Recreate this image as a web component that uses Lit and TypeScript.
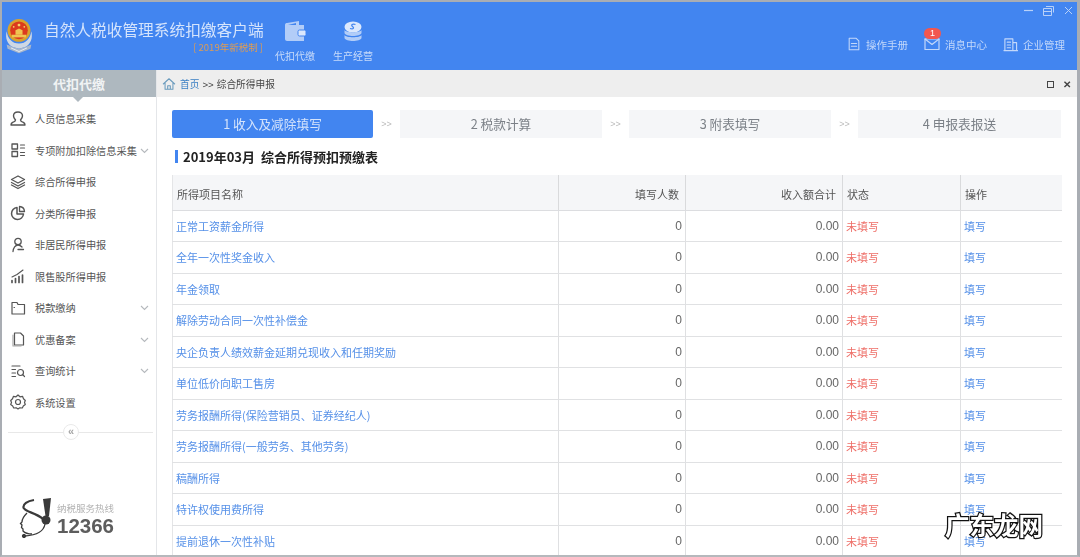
import { LitElement, html, css, svg } from "lit";
import { customElement } from "lit/decorators.js";

const ic = (body: unknown, size = 16) => html`<svg width=${size} height=${size} viewBox="0 0 16 16" fill="none" stroke="currentColor" stroke-width="1.2" stroke-linecap="round" stroke-linejoin="round">${body}</svg>`;

const menu: [string, unknown, boolean][] = [
  ["人员信息采集", svg`<path d="M5.500 9C3.800 7 3.500 5.500 3.500 5c0-2.500 2-4 4.500-4s4.500 1.500 4.500 4c0 .5-.3 2-2 4 0 1.500 1 1.800 3 2.500 1 .4 1.500 1 1.500 2.500H1c0-1.500.5-2.100 1.500-2.500 2-.7 3-1 3-2.500z" stroke-width="1.400"/>`, false],
  ["专项附加扣除信息采集", svg`<rect x="2" y="2" width="5.500" height="5" stroke-width="1.300"/><rect x="2" y="9.500" width="5.500" height="5" stroke-width="1.300"/><path d="M10.500 3h4M10.500 6h4M10.500 10.500h4M10.500 13.500h4"/>`, true],
  ["综合所得申报", svg`<path d="M8 2l6.500 3.500L8 9 1.500 5.500zM1.500 8.500L8 12l6.500-3.500M1.500 11L8 14.500l6.500-3.500" stroke-width="1.300"/>`, false],
  ["分类所得申报", svg`<path d="M7 2.500a6 6 0 1 0 6.500 6.500H7z" stroke-width="1.500" fill="none"/><path d="M9.500 1.500c2.800.2 4.800 2.200 5 5h-5z" stroke-width="1.300"/>`, false],
  ["非居民所得申报", svg`<circle cx="8" cy="4.500" r="3.200" stroke-width="1.300"/><path d="M3 14.500c.2-3.500 2.500-6.500 5-6.500 2.200 0 3 1 4 2M8 12.500h5.500" stroke-width="1.300"/>`, false],
  ["限售股所得申报", svg`<path d="M2 14.500v-2M5.500 14.500v-4M9 14.500V8.500M12.500 14.500v-7.500" stroke-width="1.700"/><path d="M2 9l5-2.500L13 2" stroke-width="1.100"/>`, false],
  ["税款缴纳", svg`<path d="M2 2.500h5l1 2h6.500v9.500H2z"/><path d="M4 7.500h.5"/>`, true],
  ["优惠备案", svg`<path d="M4.500 2h6l3 3v9h-9z" stroke-width="1.200"/><path d="M3 4v11h8" stroke="#aaa"/>`, true],
  ["查询统计", svg`<path d="M2 3h8M2 6.500h3.500M2 10h3.500M2 13.500h3.500"/><circle cx="10.500" cy="9.500" r="3"/><path d="M12.700 11.700l1.800 1.800"/>`, true],
  ["系统设置", svg`<path d="M8 1l2 1.800 2.500-.5 1 2.500 1.800 1.700-.8 2 .8 2-2 1.500-1 2-2.500-.2L8 15l-1.800-1.200-2.500.2-1-2-2-1.500.8-2-.8-2 1.800-1.700 1-2.500 2.500.5z"/><circle cx="8" cy="8" r="2.500"/>`, false],
];

const rows = ["正常工资薪金所得", "全年一次性奖金收入", "年金领取", "解除劳动合同一次性补偿金", "央企负责人绩效薪金延期兑现收入和任期奖励", "单位低价向职工售房", "劳务报酬所得(保险营销员、证券经纪人)", "劳务报酬所得(一般劳务、其他劳务)", "稿酬所得", "特许权使用费所得", "提前退休一次性补贴"];

@customElement("app-root")
export class AppRoot extends LitElement {
  static styles = css`
    :host { display: block; width: 1080px; height: 557px; overflow: hidden; position: relative; background: #fff; font-family: "Noto Sans CJK SC", "Liberation Sans", sans-serif; }
    .frame { height: 557px; box-sizing: border-box; border-top: 2px solid #a9adb3; border-left: 2px solid #a9adb3; border-right: 3px solid #a9adb3; border-bottom: 2px solid #b5b8bc; display: flex; flex-direction: column; filter: blur(0.5px); }
    .top { height: 68px; flex: none; background: #4285f0; display: flex; color: #cfe0fb; position: relative; }
    .logo { margin: 16px 2px 0 2px; flex: none; }
    .brand { margin: 16px 0 0 8px; width: 222px; }
    .brand h1 { margin: 0; font-size: 15.700px; line-height: 24px; font-weight: 400; color: #d5e4fc; white-space: nowrap; }
    .brand p { margin: -2px 0 0; font-size: 9.500px; line-height: 14px; color: #dd9c55; text-align: right; padding-right: 3px; white-space: nowrap; }
    .nav { width: 58px; display: flex; flex-direction: column; align-items: center; font-size: 10px; line-height: 14px; margin-top: 19px; color: #c8dbfa; }
    .nav svg { margin-bottom: 7px; }
    .spacer { flex: 1; }
    .tools { display: flex; align-items: center; gap: 16px; font-size: 10.500px; margin: 33px 12px 0 0; height: 18px; color: #c3d8fa; }
    .tool { display: flex; align-items: center; gap: 5px; position: relative; white-space: nowrap; }
    .badge { position: absolute; left: 0; top: -8px; width: 17px; height: 11px; border-radius: 6px; background: #f2574f; color: #fff; font-size: 9px; line-height: 11px; text-align: center; font-family: "Liberation Sans", sans-serif; }
    .win { position: absolute; right: 4px; top: 4px; display: flex; gap: 10px; color: #b9d1f8; }
    .body { flex: 1; min-height: 0; display: flex; }
    .side { width: 154px; flex: none; border-right: 1px solid #e4e6e9; display: flex; flex-direction: column; background: #fff; }
    .side-h { height: 27px; background: #aeb8bf; color: #f1f3f4; font-size: 13px; font-weight: 700; line-height: 27px; text-align: center; position: relative; flex: none; }
    .side-h::after { content: ""; position: absolute; left: 71px; bottom: -5px; border: 5px solid transparent; border-bottom: 0; border-top-color: #aeb8bf; }
    .menu { padding-top: 6px; flex: none; }
    .item { height: 31.500px; display: flex; align-items: center; color: #555; font-size: 10.200px; white-space: nowrap; }
    .item svg { color: #555; margin-left: 8px; flex: none; }
    .item span { margin-left: 9px; flex: 1; }
    .item svg.chev { color: #b5b9bd; margin: 0 7px 0 0; }
    .fold { height: 16px; margin: 6px 3px 0 6px; position: relative; display: flex; align-items: center; }
    .fold::before { content: ""; position: absolute; left: 0; right: 0; top: 50%; height: 1px; background: #e8e8e8; }
    .fold b { position: relative; width: 16px; height: 16px; margin-left: 55px; border-radius: 50%; background: #fff; border: 1px solid #e9e9e9; box-sizing: border-box; color: #a5a5a5; font: 700 11px/12px "Liberation Sans", sans-serif; text-align: center; }
    .hot { margin: auto 0 14px 16px; display: flex; align-items: flex-end; color: #555; }
    .hot small { display: block; font-size: 9.500px; line-height: 12px; color: #b3b3b3; white-space: nowrap; margin-bottom: 1px; }
    .hot strong { display: block; font: 700 20.500px/21px "Liberation Sans", sans-serif; color: #5d5d5d; }
    .hot .txt { margin: 0 0 5px 3px; }
    .main { flex: 1; min-width: 0; display: flex; flex-direction: column; }
    .crumb { height: 27px; flex: none; background: #eeeeee; display: flex; align-items: center; font-size: 9.700px; color: #444; padding: 1px 6px 0 5px; box-sizing: border-box; }
    .crumb svg { color: #6a9bbd; margin-right: 4px; }
    .crumb a { color: #3a7fc4; }
    .crumb i { font-style: normal; margin: 0 3px; font-family: "Liberation Sans", sans-serif; }
    .crumb .spacer { flex: 1; }
    .crumb .sq { width: 5px; height: 5px; border: 1.500px solid #444; margin-right: 9px; }
    .crumb .x { font: 700 10px/11px "Liberation Sans", sans-serif; color: #444; }
    .content { padding: 13px 16px 0 15px; flex: 1; min-height: 0; overflow: hidden; }
    .steps { display: flex; align-items: center; height: 28px; }
    .step { width: 202px; height: 28px; flex: none; line-height: 28px; text-align: center; font-size: 12.700px; color: #7b8087; background: #f5f6f8; }
    .step.on { background: #4285f0; color: #d5e4fc; border-radius: 2px; width: 201px; }
    .step.last { width: 203px; }
    .arr { width: 27px; flex: none; text-align: center; font: 9px "Liberation Sans", sans-serif; color: #bbb; letter-spacing: 0; }
    .title { margin: 10px 0 10px 3px; display: flex; align-items: center; height: 17px; font-size: 13px; font-weight: 700; color: #222; white-space: nowrap; }
    .title::before { content: ""; width: 3px; height: 13px; background: #4285f0; margin-right: 5px; }
    table { border-collapse: collapse; table-layout: fixed; width: 889px; font-size: 11px; }
    th { height: 35px; padding: 3px 6px 0 4px; background: #f5f6f8; font-weight: 400; color: #555; text-align: left; border-right: 1px solid #d9dadc; border-bottom: 1px solid #dcdde0; box-sizing: border-box; }
    td { height: 31.500px; padding: 0 3px; border-right: 1px solid #dfe0e2; border-bottom: 1px solid #e0e1e3; box-sizing: border-box; color: #555; white-space: nowrap; }
    th:first-child, td:first-child { border-left: 1px solid #e4e5e7; }
    th:last-child, td:last-child { border-right: 0; }
    .r { text-align: right; }
    td.n { font: 12px "Liberation Sans", sans-serif; color: #666; text-align: right; }
    td.l, td.l a { color: #5590e8; }
    td.e { color: #ee6f68; }
    .mark { position: absolute; left: 945px; top: 508px; font-size: 24.500px; line-height: 34px; font-weight: 700; color: #fff; -webkit-text-stroke: 2.500px #111; paint-order: stroke fill; white-space: nowrap; }
  `;

  render() {
    const chev = html`<svg class="chev" width="9" height="9" viewBox="0 0 9 9" fill="none" stroke="currentColor" stroke-width="1.100"><path d="M1 3l3.500 3.500L8 3"/></svg>`;
    return html`
      <div class="frame">
        <header class="top">
          <svg class="logo" width="30" height="37" viewBox="0 0 34 42">
            <path d="M3 15c-2 8 1 15 7 18l7 2 7-2c6-3 9-10 7-18-1 8-6 14-14 14S4 23 3 15z" fill="#cfd8e4"/>
            <path d="M3 30l7 3 7 2 7-2 7-3-1 5-13 5-13-5z" fill="#a8b7cc"/>
            <path d="M8 34l9 4 9-4" stroke="#eef2f7" fill="none"/>
            <circle cx="17" cy="14" r="13" fill="#d9a12e"/>
            <circle cx="17" cy="14" r="10" fill="#dc3a1e"/>
            <path d="M9 19h16v3H9z" fill="#efc452"/>
            <path d="M13 19v-5l4-2 4 2v5z" fill="#efc452"/>
            <circle cx="17" cy="8" r="1.600" fill="#f6d566"/>
            <circle cx="11" cy="10" r="1" fill="#f6d566"/><circle cx="23" cy="10" r="1" fill="#f6d566"/>
          </svg>
          <div class="brand"><h1>自然人税收管理系统扣缴客户端</h1><p>[ 2019年新税制 ]</p></div>
          <div class="nav">
            <svg width="22" height="21" viewBox="0 0 22 21"><path d="M1 4c0-1.500 1-2 2-2l12-2v4h5v16H3c-1 0-2-1-2-2z" fill="#b2cdf8"/><path d="M4 4l8-2v2z" fill="#4285f0"/><rect x="14" y="9" width="8" height="6" rx="1.500" fill="#dbe8fd" stroke="#4285f0"/></svg>
            代扣代缴
          </div>
          <div class="nav">
            <svg width="20" height="21" viewBox="0 0 20 21"><ellipse cx="10" cy="6" rx="8.500" ry="5.500" fill="#dbe8fd"/><path d="M1.500 9c1 3 16 3 17 0v3c-1 4-16 4-17 0zM1.500 14c1 3 16 3 17 0v3c-1 4-16 4-17 0z" fill="#b2cdf8"/><path d="M12.500 3.500c-3-1-5 .5-3 2s1 3-2.500 2" stroke="#4285f0" stroke-width="1.200" fill="none"/></svg>
            生产经营
          </div>
          <div class="spacer"></div>
          <div class="tools">
            <div class="tool">${ic(svg`<path d="M2.500 1.500h8l3 3v10h-11z"/><path d="M5 7.500h6M5 10.500h6"/>`, 14)}操作手册</div>
            <div class="tool"><span class="badge">1</span>${ic(svg`<path d="M1 3h14v10.500H1z"/><path d="M1 3l7 5.500L15 3"/>`, 16)}消息中心</div>
            <div class="tool">${ic(svg`<path d="M2 14.500V2h8.500v12.500M10.500 6H14.500v8.500M1 14.500h14.500M4.500 5.500h3.500M4.500 8.500h3.500M4.500 11.500h3.500"/>`, 15)}企业管理</div>
          </div>
          <div class="win">
            <svg width="9" height="9" viewBox="0 0 9 9"><path d="M0 4.500h9" stroke="currentColor" stroke-width="1.200"/></svg>
            <svg width="11" height="10" viewBox="0 0 11 10" fill="none" stroke="currentColor"><path d="M.5 2.500h8v7h-8zM.5 5.500h8M3 .5h7.500v6"/></svg>
            <svg width="9" height="9" viewBox="0 0 9 9"><path d="M1 1l7 7M8 1L1 8" stroke="currentColor"/></svg>
          </div>
        </header>
        <div class="body">
          <aside class="side">
            <div class="side-h">代扣代缴</div>
            <nav class="menu">
              ${menu.map(([t, p, c]) => html`<div class="item">${ic(p)}<span>${t}</span>${c ? chev : ""}</div>`)}
            </nav>
            <div class="fold"><b>«</b></div>
            <div class="hot">
              <svg width="36" height="44" viewBox="0 0 36 44" fill="none" stroke="#3a3a3a">
                <path d="M16 3C9 4 5 7 5.500 10.500 6.500 15 17 15 25 22" stroke-width="2.200"/>
                <path d="M9 16c-3 3-5 7-5 9l-1.500 1.500L4 28l-.5 2.500L5 32l0 2c3 3 6 3 9 3" stroke-width="1.300"/>
                <path d="M25 2l8-1-2 18h-3.500z" fill="#3a3a3a" stroke="none"/>
                <circle cx="28" cy="23" r="4.500" fill="#3a3a3a" stroke="none"/>
                <path d="M27 27c-1 6-6 11-20 12" stroke-width="1.300"/>
                <circle cx="6" cy="39" r="1.700" fill="#3a3a3a"/>
              </svg>
              <div class="txt"><small>纳税服务热线</small><strong>12366</strong></div>
            </div>
          </aside>
          <main class="main">
            <div class="crumb">
              ${ic(svg`<path d="M1.500 8L8 2l6.500 6M3.500 7v7h9V7M6.500 14v-4h3v4"/>`, 14)}
              <a>首页</a><i>&gt;&gt;</i>综合所得申报
              <span class="spacer"></span><span class="sq"></span><span class="x">✕</span>
            </div>
            <section class="content">
              <div class="steps">
                <div class="step on">1 收入及减除填写</div><div class="arr">&gt;&gt;</div>
                <div class="step">2 税款计算</div><div class="arr">&gt;&gt;</div>
                <div class="step">3 附表填写</div><div class="arr">&gt;&gt;</div>
                <div class="step last">4 申报表报送</div>
              </div>
              <div class="title">2019年03月&nbsp;&nbsp;综合所得预扣预缴表</div>
              <table>
                <colgroup><col style="width:386px"/><col style="width:127px"/><col style="width:157px"/><col style="width:118px"/><col style="width:101px"/></colgroup>
                <thead><tr><th>所得项目名称</th><th class="r">填写人数</th><th class="r">收入额合计</th><th>状态</th><th>操作</th></tr></thead>
                <tbody>
                  ${rows.map((r) => html`<tr><td class="l">${r}</td><td class="n">0</td><td class="n">0.00</td><td class="e">未填写</td><td class="l">填写</td></tr>`)}
                </tbody>
              </table>
            </section>
          </main>
        </div>
      </div>
      <div class="mark">广东龙网</div>
    `;
  }
}
